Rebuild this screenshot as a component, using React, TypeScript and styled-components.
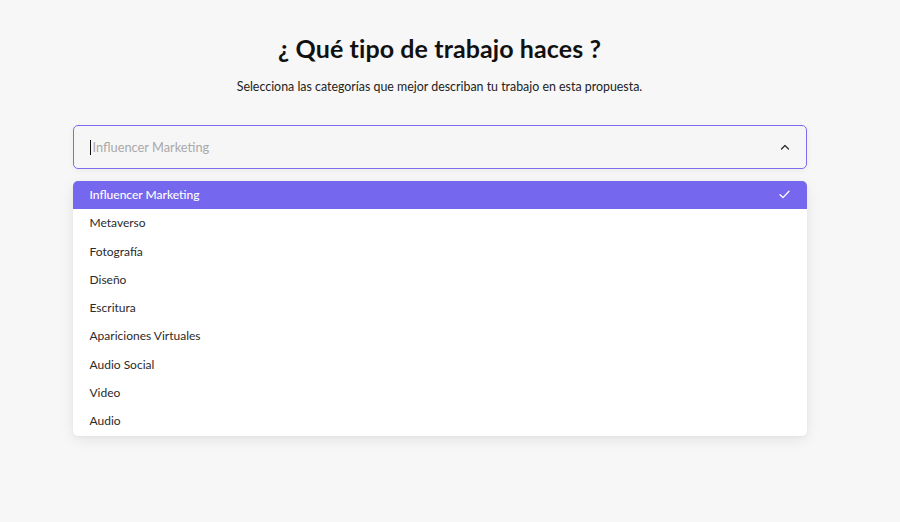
import React from "react";
import styled, { createGlobalStyle } from "styled-components";

const Global = createGlobalStyle`
  html, body { margin: 0; padding: 0; background: #f7f7f7; }
  body { font-family: "Lato", "Noto Sans", sans-serif; color: #1b1b1b; }
`;

const Page = styled.div`
  width: 879px;
  min-height: 522px;
  box-sizing: border-box;
  padding-top: 33px;
  display: flex;
  flex-direction: column;
  align-items: center;
`;

const Title = styled.h1`
  margin: 0;
  font-size: 25px;
  font-weight: 700;
  line-height: 30px;
  color: #111;
  letter-spacing: 0.1px;
`;

const Subtitle = styled.p`
  margin: 16px 0 0;
  font-size: 12.4px;
  line-height: 16px;
  color: #222;
`;

const Field = styled.div`
  margin-top: 30px;
  width: 734px;
  position: relative;
`;

const Input = styled.div`
  box-sizing: border-box;
  height: 44px;
  border: 1px solid #7b6cf0;
  border-radius: 5px;
  background: #f6f6f6;
  display: flex;
  align-items: center;
  padding: 0 16px 0 16px;
  box-shadow: 0 2px 6px rgba(0, 0, 0, 0.05);
`;

const Caret = styled.span`
  width: 1px;
  height: 15px;
  background: #111;
  margin-right: 2px;
`;

const Placeholder = styled.span`
  flex: 1;
  font-size: 12.8px;
  color: #a9a9a9;
`;

const Menu = styled.ul`
  list-style: none;
  margin: 12px 0 0;
  padding: 0 0 1px;
  background: #fff;
  border-radius: 5px;
  overflow: hidden;
  box-shadow: 0 4px 14px rgba(0, 0, 0, 0.08), 0 1px 3px rgba(0, 0, 0, 0.04);
`;

const Item = styled.li<{ $active?: boolean }>`
  height: 28.25px;
  display: flex;
  align-items: center;
  padding: 0 17px 1px 17px;
  box-sizing: border-box;
  font-size: 12px;
  color: ${(p) => (p.$active ? "#fff" : "#2a2a2a")};
  background: ${(p) => (p.$active ? "#7668ee" : "transparent")};
  font-weight: ${(p) => (p.$active ? 500 : 400)};
`;

const Label = styled.span`
  flex: 1;
`;

const items = [
  "Influencer Marketing",
  "Metaverso",
  "Fotografía",
  "Diseño",
  "Escritura",
  "Apariciones Virtuales",
  "Audio Social",
  "Video",
  "Audio",
];

export default function App() {
  return (
    <>
      <Global />
      <Page>
        <Title>¿ Qué tipo de trabajo haces ?</Title>
        <Subtitle>
          Selecciona las categorías que mejor describan tu trabajo en esta propuesta.
        </Subtitle>
        <Field>
          <Input>
            <Caret />
            <Placeholder>Influencer Marketing</Placeholder>
            <svg width="10" height="6" viewBox="0 0 10 6" fill="none">
              <path d="M1.5 5L5 1.5L8.5 5" stroke="#333" strokeWidth="1.4" strokeLinecap="round" strokeLinejoin="round" />
            </svg>
          </Input>
          <Menu>
            {items.map((t, i) => (
              <Item key={t} $active={i === 0}>
                <Label>{t}</Label>
                {i === 0 && (
                  <svg width="11" height="9" viewBox="0 0 11 9" fill="none">
                    <path d="M1 4.8L4 7.6L10 1.2" stroke="#fff" strokeWidth="1.3" strokeLinecap="round" strokeLinejoin="round" />
                  </svg>
                )}
              </Item>
            ))}
          </Menu>
        </Field>
      </Page>
    </>
  );
}
